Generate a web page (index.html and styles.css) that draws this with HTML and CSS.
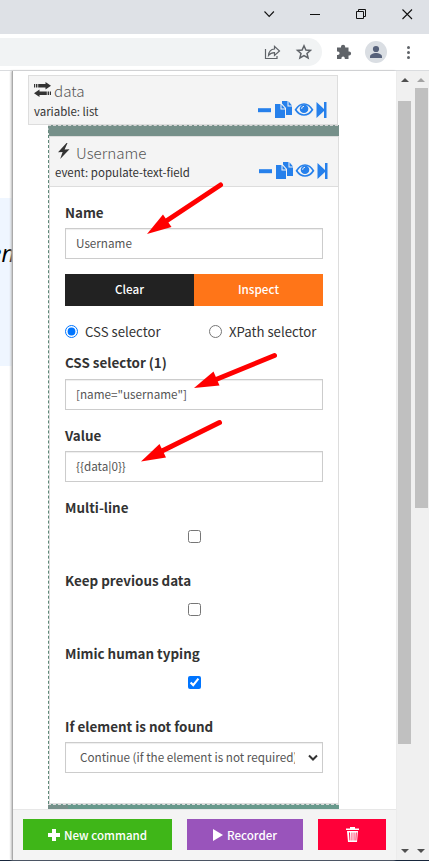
FILE: index.html
```html
<!DOCTYPE html>
<html lang="en">
<head>
<meta charset="utf-8">
<title>Command editor</title>
<link rel="stylesheet" href="styles.css">
</head>
<body>
<svg class="defs" width="0" height="0">
  <symbol id="tools" viewBox="0 0 71 18">
    <path d="M1 7.200h13v4H1z"/>
    <path d="M18 3h5.500v5.500H28V17H18zM24.500 3.500L28 7.500h-3.500zM25 0h5.500v5.500H35V14H29V7L25 2.500zM31.500 0.300L35 4.500h-3.500z"/>
    <path fill="none" stroke="#2680eb" stroke-width="1.700" d="M38.600 8.700C41 4.800 43.800 3 47 3s6 1.800 8.400 5.700C53 12.400 50.200 14 47 14s-6-1.600-8.400-5.300z"/>
    <circle cx="47" cy="7.800" r="4.300"/><path class="cut" d="M44.700 7.800c0-1.500.9-2.400 2.300-2.400" />
    <path d="M59.500 1l7.500 7V1h2.500v16H67v-7l-7.500 7z"/>
  </symbol>
</svg>
<div class="browser">
  <header class="titlebar">
    <svg width="180" height="34" viewBox="0 0 180 34" fill="none" stroke="#111" stroke-width="1.1">
      <path d="M15.500 11.500l4.700 5 4.700-5"/>
      <path d="M61 14.500h10" stroke-width="1"/>
      <path d="M107.500 11.500h7v7h-7zM109.500 11.500v-2h7v7h-2" stroke-width="1"/>
      <path d="M153.500 9.500l9.500 9.500M163 9.500l-9.500 9.500"/>
    </svg>
  </header>
  <div class="toolbar">
    <div class="omnibox">
      <svg width="48" height="18" viewBox="0 0 48 18" fill="none" stroke="#5f6368" stroke-width="1.200">
        <path d="M1.500 6v9.500h11.500V13M4.500 12.500c.3-4 2.500-6.300 6-6.500V3.300L15.500 8l-5 4.500V9.700c-2.500 0-4.500.8-6 2.800z"/>
        <path stroke-width="1.500" d="M40 2.800l1.900 4.200 4.600.4-3.500 3 1.100 4.500-4.100-2.400-4.100 2.400 1.100-4.500-3.500-3 4.600-.4z"/>
      </svg>
    </div>
    <svg class="actions" width="84" height="28" viewBox="0 0 84 28" fill="#5f6368">
      <path d="M1 9.500h4V8.800a2.100 2.100 0 0 1 4.200 0v.7h3.300v4h.6a2 2 0 0 1 0 4h-.6V21H8.800v-.8a1.700 1.700 0 0 0-3.400 0v.8H1v-3.900h.8a1.800 1.800 0 0 0 0-3.600H1z"/>
      <circle cx="40" cy="14" r="11" fill="#dadee3"/>
      <circle cx="40" cy="11" r="3.100" fill="#56617a"/>
      <path fill="#56617a" d="M34 20v-1.500c0-2.100 3.500-3.500 6-3.500s6 1.400 6 3.500V20z"/>
      <circle cx="72.500" cy="9.500" r="1.500"/><circle cx="72.500" cy="14.500" r="1.500"/><circle cx="72.500" cy="19.500" r="1.500"/>
    </svg>
  </div>
  <div class="content">
    <aside class="page"><div class="banner"><i><b>e</b>n</i></div></aside>
    <section class="panel">
      <main class="commands">
        <div class="card data">
          <div class="cap"><svg width="17" height="15" viewBox="0 0 17 15"><path d="M0 2h1.200v3.500H0zM2 2h1.400v3.500H2zM4.200 2H11.500V0l5.500 3.700-5.500 3.700V5.500H4.200zM17 9.500h-1.200V13H17zM15 9.500h-1.400V13H15zM12.800 9.500H5.500v-2L0 11.200l5.500 3.700V13h7.300z"/></svg><h2 class="t-data">data</h2></div>
          <p class="t-var">variable: list</p>
          <svg class="tools" width="71" height="18"><use href="#tools"/></svg>
        </div>
        <div class="nest">
          <div class="card user">
            <div class="cap"><svg width="13" height="16" viewBox="0 0 13 16"><path d="M9.500 0L1 9.300l4.600-.3L3.200 16 12.500 6.200l-4.900.4L10.500 0z"/></svg><h2 class="t-user">Username</h2></div>
            <p class="t-event">event: populate-text-field</p>
            <svg class="tools" width="71" height="18"><use href="#tools"/></svg>
          </div>
          <form class="fields">
            <label class="head">Name</label>
            <div class="box">Username</div>
            <div class="split"><span class="clear">Clear</span><span class="inspect">Inspect</span></div>
            <div class="radios"><label><input type="radio" name="kind" checked><span>CSS selector</span></label><label><input type="radio" name="kind"><span>XPath selector</span></label></div>
            <label class="head tall">CSS selector (1)</label>
            <div class="box">[name="username"]</div>
            <label class="head gap">Value</label>
            <div class="box">{{data|0}}</div>
            <label class="head gap">Multi-line</label>
            <div class="check"><input type="checkbox"></div>
            <label class="head">Keep previous data</label>
            <div class="check"><input type="checkbox"></div>
            <label class="head">Mimic human typing</label>
            <div class="check"><input type="checkbox" checked></div>
            <label class="head">If element is not found</label>
            <div class="box select"><span>Continue (if the element is not required)</span><svg width="10" height="8" viewBox="0 0 10 8"><path d="M1 1.500l4 4 4-4" fill="none" stroke="#333" stroke-width="2"/></svg></div>
          </form>
        </div>
        <div class="next"><span></span></div>
      </main>
      <footer class="footer">
        <div class="btn green"><svg width="12" height="12" viewBox="0 0 12 12"><path d="M4 0h4v4h4v4H8v4H4V8H0V4h4z"/></svg><span>New command</span></div>
        <div class="btn purple"><svg width="10" height="12" viewBox="0 0 10 12"><path d="M0 0l10 6-10 6z"/></svg><span>Recorder</span></div>
        <div class="btn red"><svg width="13" height="15" viewBox="0 0 13 15"><path fill-rule="evenodd" d="M4 0h5v1.500h4V3H0V1.500h4zM1 4h11l-1 11H2zM3 5.500l.5 8h.8l-.3-8zM5.600 5.500v8h.7v-8zM7.700 5.500v8h.7v-8zM9.800 5.500l-.3 8h.8l.4-8z"/></svg></div>
      </footer>
    </section>
    <div class="scroll inner"><i class="up"></i><div class="thumb"></div><i class="down"></i></div>
    <div class="scroll outer"><i class="up"></i><div class="thumb"></div><i class="down"></i></div>
  </div>
  <svg class="arrows" width="429" height="861" viewBox="0 0 429 861" fill="#f00" stroke="#f00">
    <path d="M220.500 185L167 220.500" stroke-width="5" stroke-linecap="round"/><path stroke="none" d="M147 234l16-19.500 8.500 12.500z"/>
    <path d="M274.500 355.500L216 379.500" stroke-width="5" stroke-linecap="round"/><path stroke="none" d="M194 388l19.500-16.500 6 14z"/>
    <path d="M219.500 422.500L162 451" stroke-width="5" stroke-linecap="round"/><path stroke="none" d="M141 461.500l18.500-17.500 6.500 13.500z"/>
  </svg>
</div>
</body>
</html>
```
FILE: styles.css
```css
* { box-sizing: border-box; }
body { margin: 0; overflow: hidden; font-family: "Noto Sans CJK SC", "Noto Sans", sans-serif; color: #333; }
h2, p { margin: 0; }
svg { display: block; flex: none; }
.defs { position: absolute; }
.browser { position: relative; width: 429px; height: 861px; display: flex; flex-direction: column; background: #fff; border-bottom: 1px solid #17263b; }
.titlebar { height: 34px; background: #dee1e6; display: flex; justify-content: flex-end; }
.toolbar { height: 37px; padding-top: 4px; display: flex; border-bottom: 1px solid #dadcdf; }
.omnibox { width: 322px; height: 28px; border-radius: 0 14px 14px 0; background: #f1f3f4; display: flex; justify-content: flex-end; padding: 5px 10px 0 0; }
.actions { margin-left: 14px; }
.content { display: flex; flex: 1; min-height: 0; }
.page { width: 12px; overflow: hidden; padding-top: 127px; }
.banner { height: 168px; background: #eff6ff; padding-top: 37px; }
.banner i { display: block; font: italic 23px/36px "Open Sans", sans-serif; color: #000; margin-left: -10px; white-space: nowrap; }
.banner b { font-weight: 400; color: #002060; }
.panel { width: 384px; border-left: 1px solid #aaa; box-shadow: -1px 0 2px #bbb; display: flex; flex-direction: column; z-index: 1; background: #fff; }
.commands { height: 738px; padding: 4px 0 0 15px; }
.card { background: #f4f4f4; border: 1px solid #ddd; position: relative; }
.data { width: 310px; height: 50px; padding: 6px 5px; }
.cap { display: flex; height: 20px; }
.cap svg { fill: #333; }
.cap h2 { font-size: 15.200px; line-height: 17px; font-weight: 300; color: #555; }
.data h2 { margin-left: 3px; }
.card p { font-size: 11.450px; line-height: 18px; margin-top: 0; white-space: nowrap; }
.tools { position: absolute; right: 9px; top: 25px; fill: #2680eb; }
.cut { fill: none; stroke: #f4f4f4; stroke-width: 1; }
.nest { margin-left: 20px; width: 291px; height: 679px; border-left: 1px dashed #5e8878; border-top: 11px solid #76908a; position: relative; }
.nest::before { content: ""; position: absolute; left: -1px; top: -11px; width: 290px; border-top: 1px dashed #d5d5d5; }
.user { height: 51px; padding: 6px 5px; }
.user .cap svg { margin-left: 2px; }
.user h2 { margin: 1px 0 0 6px; }
.user p { margin-top: 0; }
.fields { height: 617px; border: 1px solid #ddd; border-top: 0; padding: 16px 15px 0; }
.head { display: block; height: 25px; font-size: 13.400px; line-height: 18px; font-weight: 700; white-space: nowrap; }
.tall { height: 26px; }
.gap { margin-top: 16px; }
.box { height: 31px; border: 1px solid #ccc; box-shadow: inset 0 1px 1px #eee; padding: 0 10px; font-size: 11.700px; line-height: 28px; color: #555; }
.split { display: flex; height: 32px; margin-top: 15px; }
.split span { width: 129px; text-align: center; font-size: 11.700px; line-height: 30px; font-weight: 500; color: #fff; }
.clear { background: #222; }
.inspect { background: #ff7518; }
.radios { display: flex; height: 47px; padding-top: 16px; }
.radios label { display: flex; width: 144px; height: 20px; font-size: 13.200px; line-height: 19px; white-space: nowrap; }
.radios input { margin: 3px 7px 0 0; width: 13px; height: 13px; flex: none; }
.radios label + label { padding-left: 0; }
.check { height: 48px; text-align: center; line-height: 0; }
.check input { margin: 7px 0 0; width: 13px; height: 13px; }
.select { display: flex; padding: 0 4px 0 14px; }
.select span { width: 215px; overflow: hidden; white-space: nowrap; }
.select svg { margin: 11px 0 0 auto; }
.radios { gap: 0; justify-content: space-between; margin-right: -15px; }
.radios label:last-child { width: 129px; }
.next { margin-left: 20px; width: 291px; height: 5px; background: #68998c; border-top: 1px dashed #ddd; }
.next span { display: block; width: 20px; height: 5px; background: #76908a; }
.footer { flex: 1; background: #f4f4f4; border-top: 1px solid #e7e7e7; display: flex; padding: 9px 10px; gap: 15px; }
.btn { height: 31px; display: flex; align-items: center; justify-content: center; color: #fff; fill: #fff; font-size: 11.600px; font-weight: 500; line-height: 30px; white-space: nowrap; gap: 4px; }
.green { width: 149px; background: #3fb618; }
.purple { width: 116px; background: #9954bb; }
.red { width: 68px; background: #ff0039; }
.scroll { background: #f0f0f0; display: flex; flex-direction: column; align-items: center; padding: 7px 0; position: relative; }
.inner { width: 17px; }
.outer { width: 16px; }
.scroll .thumb { width: 13px; background: #c0c0c0; }
.inner .thumb { height: 643px; margin-top: 19px; }
.outer .thumb { height: 420px; margin-top: 6px; }
.up, .down { border: 4px solid transparent; width: 0; height: 0; }
.up { border-top: 0; border-bottom-color: #505050; }
.outer .up { border-bottom-color: #a3a3a3; }
.down { border-bottom: 0; border-top-color: #505050; margin-top: auto; }
.arrows { position: absolute; left: 0; top: 0; z-index: 2; }
```
